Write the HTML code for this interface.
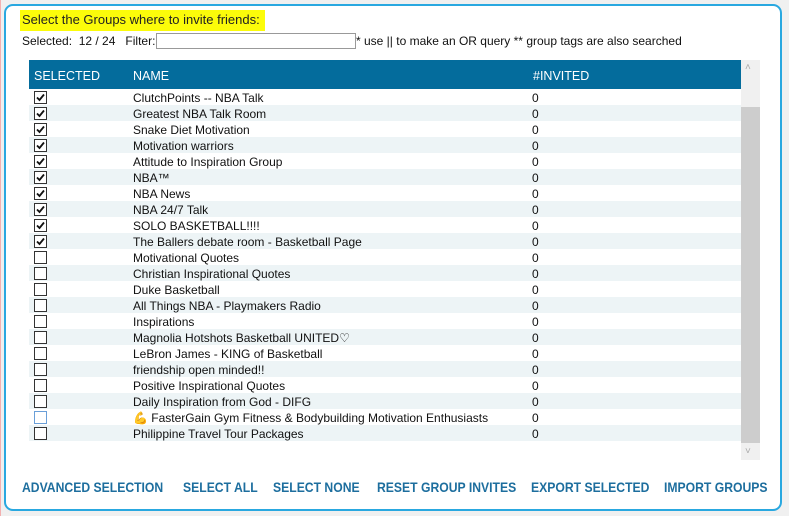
<!DOCTYPE html><html><head><style>
body{margin:0;width:789px;height:516px;background:#f0f0f0;position:relative;overflow:hidden;font-family:"Liberation Sans",sans-serif;}
.frame{position:absolute;left:4px;top:4px;width:774px;height:503px;border:2px solid #29a8e0;border-radius:9px;background:#fff;}
.abs{position:absolute;white-space:nowrap}
.t{font-size:12px;color:#111}
.hdr{position:absolute;left:29px;top:60px;width:712px;height:29px;background:#046c9c;color:#fff;font-size:12.5px}
.row{position:absolute;left:29px;width:712px;height:16px;font-size:12px;color:#111}
.row.alt{background:#edf4f6}
.cb{position:absolute;left:5px;top:2px;width:11px;height:11px;border:1px solid #333;background:#fff}
.cb svg{position:absolute;left:0;top:0}
.btn{position:absolute;top:479px;font-size:14px;font-weight:bold;color:#1d6e9e;transform-origin:left;transform:scaleX(.87);white-space:nowrap}
</style></head><body>
<div style="position:absolute;left:0;top:0;width:1px;height:516px;background:#f3b0b0"></div>
<div class="frame"></div>
<div class="abs" style="left:20px;top:10px;width:245px;height:21px;background:#fcfc0a"></div>
<div class="abs" style="left:22px;top:12px;font-size:13px;color:#222">Select the Groups where to invite friends:</div>
<div class="abs t" style="left:22px;top:34px">Selected:&nbsp; 12 / 24 &nbsp; Filter:</div>
<div class="abs" style="left:156px;top:33px;width:198px;height:14px;border:1px solid #999;background:#fff"></div>
<div class="abs t" style="left:356px;top:34px">* use || to make an OR query ** group tags are also searched</div>
<div class="hdr"><span class="abs" style="left:5px;top:9px">SELECTED</span><span class="abs" style="left:104px;top:9px">NAME</span><span class="abs" style="left:504px;top:9px">#INVITED</span></div>
<div class="abs" style="left:741px;top:60px;width:19px;height:400px;background:#f0f0f0"></div>
<div class="abs" style="left:741px;top:107px;width:19px;height:336px;background:#cdcdcd"></div>
<div class="abs" style="left:745px;top:62px;font-size:10px;color:#aaa">˄</div>
<div class="abs" style="left:745px;top:446px;font-size:10px;color:#aaa">˅</div>
<div id="rows"></div>
<div class="btn" style="left:22px">ADVANCED SELECTION</div>
<div class="btn" style="left:183px">SELECT ALL</div>
<div class="btn" style="left:273px">SELECT NONE</div>
<div class="btn" style="left:377px">RESET GROUP INVITES</div>
<div class="btn" style="left:531px">EXPORT SELECTED</div>
<div class="btn" style="left:664px">IMPORT GROUPS</div>
<script>
var n=["ClutchPoints -- NBA Talk","Greatest NBA Talk Room","Snake Diet Motivation","Motivation warriors","Attitude to Inspiration Group","NBA™","NBA News","NBA 24/7 Talk","SOLO BASKETBALL!!!!","The Ballers debate room - Basketball Page","Motivational Quotes","Christian Inspirational Quotes","Duke Basketball","All Things NBA - Playmakers Radio","Inspirations","Magnolia Hotshots Basketball UNITED♡","LeBron James - KING of Basketball","friendship open minded!!","Positive Inspirational Quotes","Daily Inspiration from God - DIFG","💪 FasterGain Gym Fitness &amp; Bodybuilding Motivation Enthusiasts","Philippine Travel Tour Packages"];
var h="";
n.forEach(function(s,i){var ck=i<10?'<svg width="11" height="11"><path d="M2 5.5 L4.5 8 L9 2.5" stroke="#111" stroke-width="1.8" fill="none"/></svg>':'';
var bc=i==20?'border-color:#6a9fd8':'';
h+='<div class="row'+(i%2?' alt':'')+'" style="top:'+(89+i*16)+'px"><div class="cb" style="'+bc+'">'+ck+'</div><span class="abs" style="left:104px;top:2px">'+s+'</span><span class="abs" style="left:503px;top:2px">0</span></div>';});
document.getElementById("rows").innerHTML=h;
</script>
</body></html>
